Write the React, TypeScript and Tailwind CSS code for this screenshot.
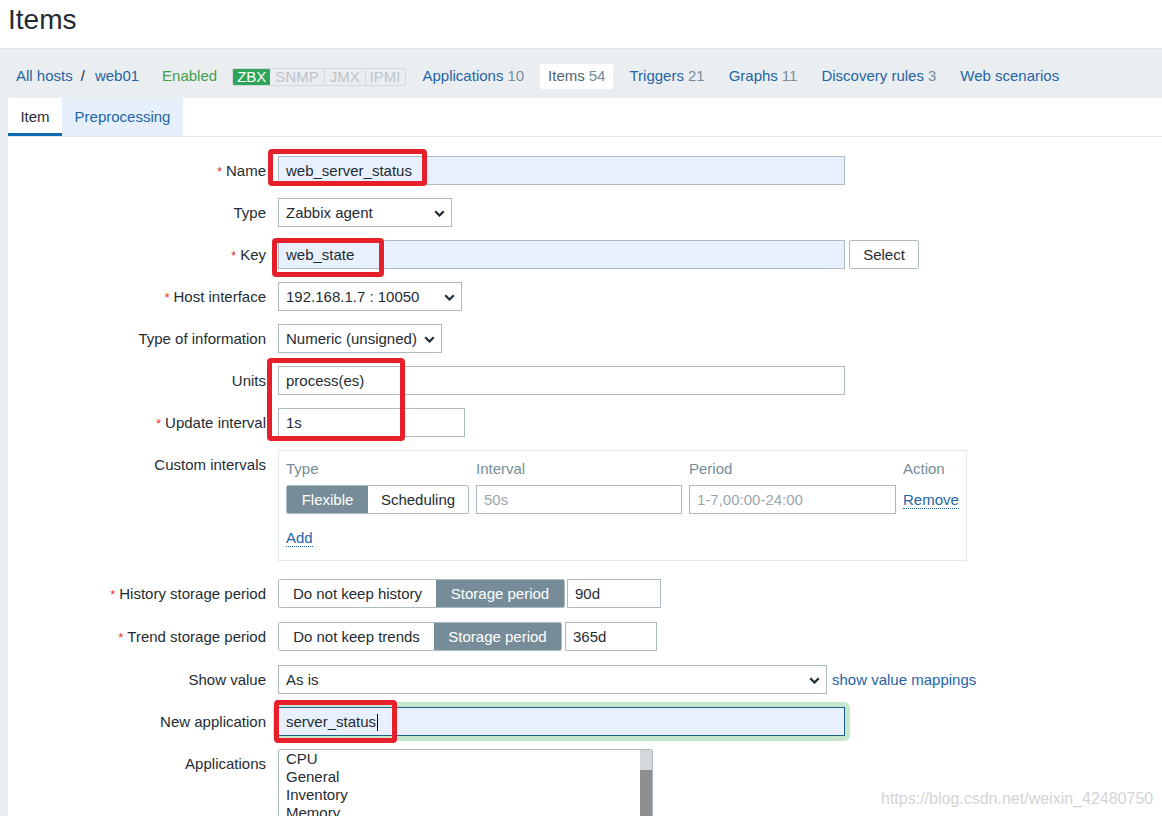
import React from 'react';

const Chevron = () => (
  <svg width="11" height="7" viewBox="0 0 11 7" className="shrink-0">
    <polyline points="1.2,1.2 5.5,5.5 9.8,1.2" fill="none" stroke="#1f2c33" strokeWidth="2.2" />
  </svg>
);

function Label({ req, children }: { req?: boolean; children: React.ReactNode }) {
  return (
    <span>
      {req && <span className="mr-[4px] text-[13px] text-[#e33734]">*</span>}
      {children}
    </span>
  );
}

function Row({
  label,
  req,
  top,
  className,
  children,
}: {
  label: string;
  req?: boolean;
  top?: boolean;
  className?: string;
  children: React.ReactNode;
}) {
  return (
    <div className={`flex ${top ? 'items-start' : 'items-center'} ${className ?? ''}`}>
      <div className={`w-[258px] shrink-0 text-right leading-[18px] ${top ? 'pt-[6px]' : 'pt-px'}`}>
        <Label req={req}>{label}</Label>
      </div>
      <div className="ml-[12px] flex items-center">{children}</div>
    </div>
  );
}

function Select({ value, width }: { value: string; width: string }) {
  return (
    <div className={`flex h-[29px] items-center justify-between border border-[#acbbc2] bg-white pl-[7px] pr-[6px] pt-px ${width}`}>
      <span>{value}</span>
      <Chevron />
    </div>
  );
}

function Segmented({ left, right, lw, rw }: { left: string; right: string; lw: string; rw: string }) {
  return (
    <div className="flex h-[29px] overflow-hidden rounded-[2px] border border-[#acbbc2]">
      <div className={`flex items-center justify-center bg-white pt-px ${lw}`}>{left}</div>
      <div className={`flex items-center justify-center bg-[#768d99] pt-px text-white ${rw}`}>{right}</div>
    </div>
  );
}

const navLinks = [
  { name: 'Applications', count: '10' },
  { name: 'Items', count: '54', active: true },
  { name: 'Triggers', count: '21' },
  { name: 'Graphs', count: '11' },
  { name: 'Discovery rules', count: '3' },
  { name: 'Web scenarios', count: '' },
];

const field = 'flex h-[29px] items-center border border-[#acbbc2] px-[7px] pt-px';

export default function App() {
  return (
    <div className="relative h-[816px] overflow-hidden bg-[#ebeef0] font-['Liberation_Sans',Arial,sans-serif] text-[15px] text-[#1f2c33]">
      {/* Header */}
      <header className="h-[48px] bg-white px-[8px] pt-[6px]">
        <h1 className="text-[28px] leading-[28px]">Items</h1>
      </header>

      {/* Host navigation */}
      <nav className="flex h-[50px] items-center border-t border-[#dde2e5] pl-[16px] pt-[6px]">
        <a className="text-[#1f65a6]">All hosts</a>
        <span className="ml-[8px] mr-[10px]">/</span>
        <a className="text-[#1f65a6]">web01</a>
        <span className="ml-[23px] text-[#429e47]">Enabled</span>
        <div className="ml-[15px] flex h-[18px] overflow-hidden rounded-[2px] border border-[#d3d9dc] text-[15px] leading-[16px]">
          <span className="flex items-center bg-[#2da55a] px-[4px] text-white">ZBX</span>
          <span className="flex items-center border-r border-[#d3d9dc] px-[5px] text-[#bcc4c9]">SNMP</span>
          <span className="flex items-center border-r border-[#d3d9dc] px-[5px] text-[#bcc4c9]">JMX</span>
          <span className="flex items-center px-[4px] text-[#bcc4c9]">IPMI</span>
        </div>
        <div className="ml-[9px] flex items-center gap-[8px]">
          {navLinks.map((l) => (
            <div
              key={l.name}
              className={`flex h-[25px] items-center rounded-[2px] px-[8px] ${l.active ? 'bg-white text-[#4f6270]' : 'text-[#1f65a6]'}`}
            >
              {l.name}
              {l.count && <span className="ml-[4px] text-[#768d99]">{l.count}</span>}
            </div>
          ))}
        </div>
      </nav>

      {/* Form card */}
      <div className="ml-[8px] h-full bg-white">
        <div className="flex h-[39px] border-b border-[#e6e9eb]">
          <div className="flex h-full w-[54px] items-center justify-center border-b-[3px] border-[#0f6cb0] pt-[3px]">
            Item
          </div>
          <div className="flex h-full w-[121px] items-center justify-center bg-[#e5f0fa] pt-px text-[#1f65a6]">
            Preprocessing
          </div>
        </div>

        <div className="flex flex-col pt-[19px]">
          <div className="flex flex-col gap-[13px]">
            <Row label="Name" req>
              <div className={`${field} w-[567px] bg-[#e8f0fe]`}>web_server_status</div>
            </Row>
            <Row label="Type">
              <Select value="Zabbix agent" width="w-[174px]" />
            </Row>
            <Row label="Key" req>
              <div className={`${field} w-[567px] bg-[#e8f0fe]`}>web_state</div>
              <div className="ml-[4px] flex h-[29px] w-[70px] items-center justify-center rounded-[2px] border border-[#acbbc2] bg-white pt-px">
                Select
              </div>
            </Row>
            <Row label="Host interface" req>
              <Select value="192.168.1.7 : 10050" width="w-[184px]" />
            </Row>
            <Row label="Type of information">
              <Select value="Numeric (unsigned)" width="w-[164px]" />
            </Row>
            <Row label="Units">
              <div className={`${field} w-[567px] bg-white`}>process(es)</div>
            </Row>
            <Row label="Update interval" req>
              <div className={`${field} w-[187px] bg-white`}>1s</div>
            </Row>
            <Row label="Custom intervals" top>
              <div className="h-[111px] w-[689px] border border-[#e6e9eb] pl-[7px] pt-[9px]">
                <div className="grid grid-cols-[183px_206px_207px_auto] gap-x-[7px] leading-[18px] text-[#768d99]">
                  <span>Type</span>
                  <span>Interval</span>
                  <span>Period</span>
                  <span>Action</span>
                </div>
                <div className="mt-[7px] grid grid-cols-[183px_206px_207px_auto] items-center gap-x-[7px]">
                  <div className="flex h-[29px] overflow-hidden rounded-[2px] border border-[#acbbc2]">
                    <div className="flex w-[81px] items-center justify-center bg-[#768d99] pt-px text-white">Flexible</div>
                    <div className="flex flex-1 items-center justify-center bg-white pt-px">Scheduling</div>
                  </div>
                  <div className={`${field} text-[#9aa6ad]`}>50s</div>
                  <div className={`${field} text-[#9aa6ad]`}>1-7,00:00-24:00</div>
                  <span className="justify-self-start border-b border-dotted border-[#1f65a6] leading-[17px] text-[#1f65a6]">
                    Remove
                  </span>
                </div>
                <div className="mt-[15px] flex">
                  <span className="border-b border-dotted border-[#1f65a6] leading-[17px] text-[#1f65a6]">Add</span>
                </div>
              </div>
            </Row>
          </div>

          <Row label="History storage period" req className="mt-[18px]">
            <Segmented left="Do not keep history" right="Storage period" lw="w-[157px]" rw="w-[128px]" />
            <div className={`${field} ml-[2px] w-[94px]`}>90d</div>
          </Row>
          <Row label="Trend storage period" req className="mt-[14px]">
            <Segmented left="Do not keep trends" right="Storage period" lw="w-[155px]" rw="w-[127px]" />
            <div className={`${field} ml-[3px] w-[92px]`}>365d</div>
          </Row>
          <Row label="Show value" className="mt-[14px]">
            <Select value="As is" width="w-[549px]" />
            <span className="ml-[5px] pt-px text-[#1f65a6]">show value mappings</span>
          </Row>
          <Row label="New application" className="mt-[13px]">
            <div className="rounded-[2px] shadow-[0_0_0_5px_#c6e6cf]">
              <div className="flex h-[29px] w-[567px] items-center border border-[#1b5f8f] bg-[#e8f0fe] px-[7px] pt-px">
                server_status
                <span className="ml-px inline-block h-[17px] w-px bg-black" />
              </div>
            </div>
          </Row>
          <Row label="Applications" top className="mt-[13px]">
            <div className="flex h-[90px] w-[375px] overflow-hidden rounded-t-[2px] border border-[#acbbc2] bg-white">
              <div className="flex-1 px-[7px] leading-[18px]">
                <div>CPU</div>
                <div>General</div>
                <div>Inventory</div>
                <div>Memory</div>
              </div>
              <div className="flex w-[12px] flex-col">
                <div className="h-[20px] bg-[#d3d8db]" />
                <div className="flex-1 bg-[#8e8e8e]" />
              </div>
            </div>
          </Row>
        </div>
      </div>

      {/* Annotation boxes */}
      <div className="absolute left-[268px] top-[149px] h-[37px] w-[159px] rounded-[4px] border-[5px] border-[#e5202a]" />
      <div className="absolute left-[272px] top-[238px] h-[39px] w-[112px] rounded-[4px] border-[5px] border-[#e5202a]" />
      <div className="absolute left-[267px] top-[358px] h-[83px] w-[138px] rounded-[4px] border-[5px] border-[#e5202a]" />
      <div className="absolute left-[274px] top-[700px] h-[43px] w-[123px] rounded-[4px] border-[5px] border-[#e5202a]" />

      {/* Watermark */}
      <div className="absolute left-[881px] top-[787px] text-[16px] text-[#d4d4d4]">
        https://blog.csdn.net/weixin_42480750
      </div>
    </div>
  );
}
